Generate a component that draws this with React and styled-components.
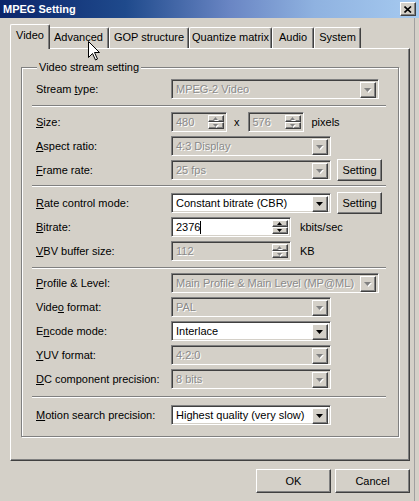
import React from 'react';
import styled, { createGlobalStyle, css } from 'styled-components';

const Global = createGlobalStyle`
  html, body { margin: 0; padding: 0; background: #d4d0c8; }
  body { font-family: "Liberation Sans", Arial, sans-serif; font-size: 11px; color: #000; }
  * { box-sizing: border-box; }
`;

const raised = css`
  border: 1px solid;
  border-color: #fff #404040 #404040 #fff;
  box-shadow: inset -1px -1px #808080, inset 1px 1px #d4d0c8;
  background: #d4d0c8;
`;

const sunken = css`
  border: 1px solid;
  border-color: #808080 #fff #fff #808080;
  box-shadow: inset 1px 1px #404040, inset -1px -1px #d4d0c8;
`;

const Window = styled.div`
  position: relative;
  width: 419px;
  height: 501px;
  background: #d4d0c8;
  overflow: hidden;
  display: flex;
  flex-direction: column;
`;

const TitleBar = styled.div`
  height: 18px;
  display: flex;
  align-items: center;
  justify-content: space-between;
  padding: 0 3px 0 3px;
  background: linear-gradient(to right, #0a246a 0%, #1f4a8c 30%, #6a86c4 55%, #8fb2e0 75%, #a6caf0 100%);
  color: #fff;
  font-weight: bold;
  font-size: 11px;
`;

const CloseButton = styled.div`
  ${raised}
  width: 16px;
  height: 14px;
  display: flex;
  align-items: center;
  justify-content: center;
`;

const Body = styled.div`
  flex: 1;
  display: flex;
  flex-direction: column;
  padding: 6px 0 0 10px;
  border-right: 1px solid #a0a0a0;
  margin-right: 4px;
`;

const TabStrip = styled.div`
  display: flex;
  align-items: flex-end;
  height: 24px;
  padding-left: 2px;
  position: relative;
  z-index: 1;
`;

const Tab = styled.div`
  width: ${p => p.$w}px;
  height: ${p => (p.$active ? 25 : 21)}px;
  margin: ${p => (p.$active ? '0 -2px -1px -2px' : '0')};
  padding-top: ${p => (p.$active ? 4 : 3)}px;
  text-align: center;
  background: #d4d0c8;
  border-top: 1px solid #fff;
  border-left: 1px solid #fff;
  border-right: 1px solid #404040;
  box-shadow: inset -1px 0 #808080;
  border-radius: 2px 2px 0 0;
  position: relative;
  z-index: ${p => (p.$active ? 2 : 0)};
  white-space: nowrap;
`;

const Panel = styled.div`
  width: 400px;
  height: 413px;
  border: 1px solid;
  border-color: #fff #404040 #404040 #fff;
  box-shadow: inset -1px -1px #808080;
  padding: 12px 10px 0 10px;
`;

const Group = styled.fieldset`
  margin: 0;
  width: 378px;
  padding: 1px 12px 9px 10px;
  border: 1px solid #808080;
  box-shadow: inset 1px 1px #fff, 1px 1px #fff;
  display: flex;
  flex-direction: column;
`;

const Legend = styled.legend`
  margin-left: 5px;
  padding: 0 2px;
  line-height: 13px;
  background: #d4d0c8;
`;

const Row = styled.div`
  display: flex;
  align-items: center;
  height: 24px;
  margin-top: ${p => p.$top || 0}px;
`;

const Label = styled.div`
  width: 139px;
  padding-left: 4px;
  white-space: nowrap;
  flex-shrink: 0;
`;

const Controls = styled.div`
  display: flex;
  align-items: center;
  gap: ${p => p.$gap || 6}px;
`;

const Separator = styled.div`
  height: 2px;
  border-top: 1px solid #808080;
  border-bottom: 1px solid #fff;
  margin: ${p => p.$top}px 0 ${p => p.$bottom}px 0;
`;

const Combo = styled.div`
  ${sunken}
  width: ${p => p.$w}px;
  height: 20px;
  padding: 2px;
  display: flex;
  background: ${p => (p.$disabled ? '#d4d0c8' : '#fff')};
`;

const FieldText = styled.div`
  flex: 1;
  display: flex;
  align-items: center;
  padding-left: 2px;
  white-space: nowrap;
  overflow: hidden;
  color: ${p => (p.$disabled ? '#8a8a8a' : '#000')};
  text-shadow: ${p => (p.$disabled ? '1px 1px 0 #fff' : 'none')};
`;

const DropButton = styled.div`
  ${raised}
  width: 16px;
  height: 16px;
  display: flex;
  align-items: center;
  justify-content: center;
`;

const SpinCol = styled.div`
  width: 16px;
  display: flex;
  flex-direction: column;
`;

const SpinHalf = styled.div`
  ${raised}
  height: 8px;
  display: flex;
  align-items: center;
  justify-content: center;
`;

const Caret = styled.span`
  display: inline-block;
  width: 1px;
  height: 13px;
  background: #000;
`;

const Sep = styled.span`
  margin-left: -1px;
`;

const Button = styled.div`
  ${raised}
  width: ${p => p.$w}px;
  height: ${p => p.$h}px;
  display: flex;
  align-items: center;
  justify-content: center;
`;

const Footer = styled.div`
  display: flex;
  justify-content: flex-end;
  gap: 4px;
  width: 400px;
  margin-top: 8px;
`;

const Cursor = styled.svg`
  position: absolute;
  left: 88px;
  top: 41px;
  z-index: 10;
`;

const Arrow = ({ disabled, dir = 'down', w = 7, h = 4 }) => {
  const pts = dir === 'down' ? `0,0 ${w},0 ${w / 2},${h}` : `0,${h} ${w},${h} ${w / 2},0`;
  return (
    <svg width={w + 1} height={h + 1} viewBox={`0 0 ${w + 1} ${h + 1}`}>
      {disabled && <polygon points={pts} transform="translate(1,1)" fill="#fff" />}
      <polygon points={pts} fill={disabled ? '#808080' : '#000'} />
    </svg>
  );
};

const ComboBox = ({ w, value, disabled }) => (
  <Combo $w={w} $disabled={disabled}>
    <FieldText $disabled={disabled}>{value}</FieldText>
    <DropButton>
      <Arrow disabled={disabled} />
    </DropButton>
  </Combo>
);

const SpinBox = ({ w, value, disabled, caret }) => (
  <Combo $w={w} $disabled={disabled}>
    <FieldText $disabled={disabled}>
      {value}
      {caret && <Caret />}
    </FieldText>
    <SpinCol>
      <SpinHalf><Arrow dir="up" w={5} h={3} disabled={disabled} /></SpinHalf>
      <SpinHalf><Arrow w={5} h={3} disabled={disabled} /></SpinHalf>
    </SpinCol>
  </Combo>
);

const tabs = [
  { label: 'Video', w: 40 },
  { label: 'Advanced', w: 61 },
  { label: 'GOP structure', w: 80 },
  { label: 'Quantize matrix', w: 83 },
  { label: 'Audio', w: 42 },
  { label: 'System', w: 47 },
];

export default function App() {
  return (
    <>
      <Global />
      <Window>
        <TitleBar>
          <span>MPEG Setting</span>
          <CloseButton>
            <svg width="8" height="7" viewBox="0 0 8 7">
              <path d="M0.5 0.5 L7 6.5 M7 0.5 L0.5 6.5" stroke="#000" strokeWidth="1.6" />
            </svg>
          </CloseButton>
        </TitleBar>
        <Body>
          <TabStrip>
            {tabs.map((t, i) => (
              <Tab key={t.label} $w={t.w} $active={i === 0}>{t.label}</Tab>
            ))}
          </TabStrip>
          <Panel>
            <Group>
              <Legend>Video stream setting</Legend>
              <Row $top={2}>
                <Label>Stream <u>t</u>ype:</Label>
                <ComboBox w={208} value="MPEG-2 Video" disabled />
              </Row>
              <Separator $top={4} $bottom={3} />
              <Row>
                <Label><u>S</u>ize:</Label>
                <Controls $gap={8}>
                  <SpinBox w={56} value="480" disabled />
                  <Sep>x</Sep>
                  <SpinBox w={56} value="576" disabled />
                  <span>pixels</span>
                </Controls>
              </Row>
              <Row>
                <Label><u>A</u>spect ratio:</Label>
                <ComboBox w={160} value="4:3 Display" disabled />
              </Row>
              <Row>
                <Label><u>F</u>rame rate:</Label>
                <Controls>
                  <ComboBox w={160} value="25 fps" disabled />
                  <Button $w={45} $h={22}>Setting</Button>
                </Controls>
              </Row>
              <Separator $top={3} $bottom={4} />
              <Row>
                <Label><u>R</u>ate control mode:</Label>
                <Controls>
                  <ComboBox w={160} value="Constant bitrate (CBR)" />
                  <Button $w={45} $h={22}>Setting</Button>
                </Controls>
              </Row>
              <Row>
                <Label><u>B</u>itrate:</Label>
                <Controls $gap={9}>
                  <SpinBox w={120} value="2376" caret />
                  <span>kbits/sec</span>
                </Controls>
              </Row>
              <Row>
                <Label><u>V</u>BV buffer size:</Label>
                <Controls $gap={9}>
                  <SpinBox w={120} value="112" disabled />
                  <span>KB</span>
                </Controls>
              </Row>
              <Separator $top={4} $bottom={2} />
              <Row>
                <Label><u>P</u>rofile &amp; Level:</Label>
                <ComboBox w={208} value="Main Profile & Main Level (MP@ML)" disabled />
              </Row>
              <Row>
                <Label>Vide<u>o</u> format:</Label>
                <ComboBox w={160} value="PAL" disabled />
              </Row>
              <Row>
                <Label>E<u>n</u>code mode:</Label>
                <ComboBox w={160} value="Interlace" />
              </Row>
              <Row>
                <Label><u>Y</u>UV format:</Label>
                <ComboBox w={160} value="4:2:0" disabled />
              </Row>
              <Row>
                <Label><u>D</u>C component precision:</Label>
                <ComboBox w={160} value="8 bits" disabled />
              </Row>
              <Separator $top={5} $bottom={5} />
              <Row>
                <Label><u>M</u>otion search precision:</Label>
                <ComboBox w={160} value="Highest quality (very slow)" />
              </Row>
            </Group>
          </Panel>
          <Footer>
            <Button $w={75} $h={24}>OK</Button>
            <Button $w={75} $h={24}>Cancel</Button>
          </Footer>
        </Body>
        <Cursor width="13" height="20" viewBox="0 0 13 20">
          <path d="M0.5 0.5 L0.5 16.5 L4.5 12.5 L7.5 19 L9.5 18 L6.5 11.5 L11.5 11.5 Z" fill="#fff" stroke="#000" strokeWidth="1" />
        </Cursor>
      </Window>
    </>
  );
}
